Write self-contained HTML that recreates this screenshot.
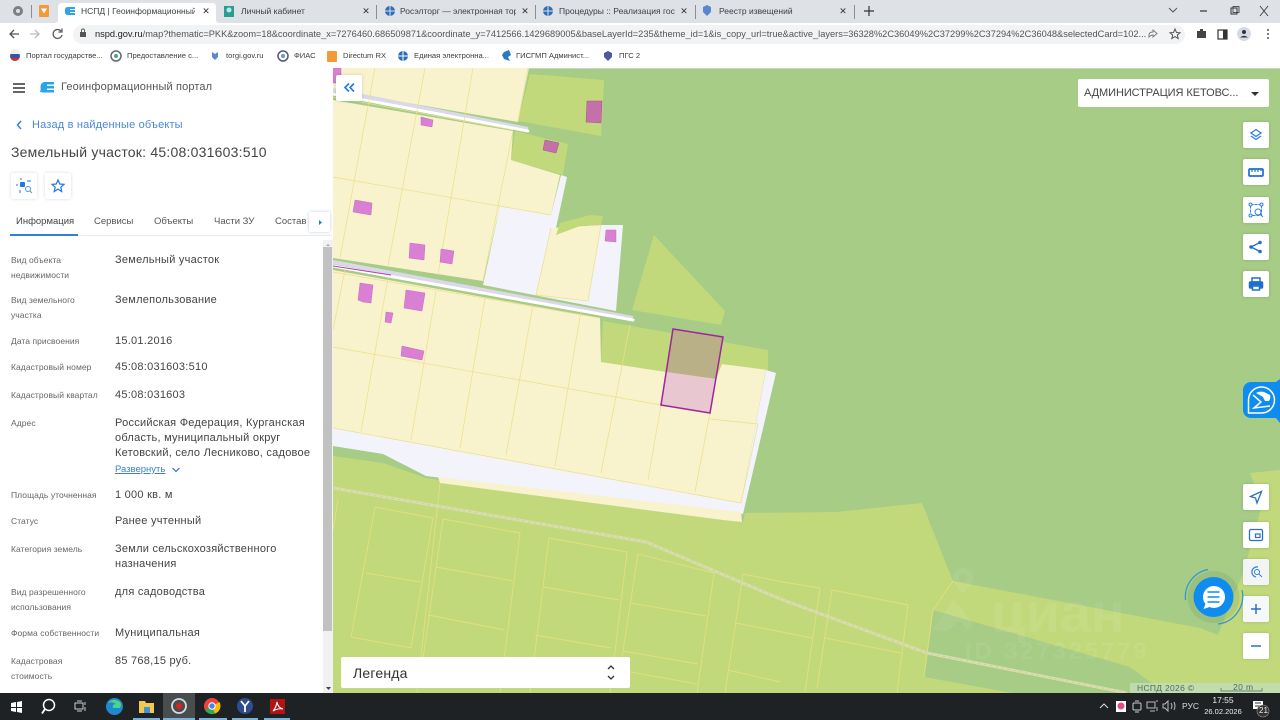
<!DOCTYPE html>
<html lang="ru">
<head>
<meta charset="utf-8">
<title>НСПД</title>
<style>
html,body{margin:0;padding:0;width:1280px;height:720px;overflow:hidden;background:#fff;font-family:"Liberation Sans","DejaVu Sans",sans-serif}
#w{position:absolute;left:0;top:0;width:1280px;height:720px;overflow:hidden;filter:blur(.3px)}
.t{position:absolute;white-space:nowrap}
.a{position:absolute}
.l{position:absolute;left:11px;font-size:8.5px;line-height:15px;color:#666;white-space:nowrap;letter-spacing:.06px}
.v{position:absolute;left:115px;font-size:11px;line-height:15px;color:#444;white-space:nowrap;letter-spacing:.25px}
.tab{position:absolute;top:5px;font-size:8.5px;line-height:12px;color:#3c4043;white-space:nowrap;overflow:hidden}
.x{position:absolute;top:5px;width:8px;text-align:center;font-size:9px;line-height:12px;color:#333}
.sep{position:absolute;top:5px;width:1px;height:14px;background:#8a8d91}
.bm{position:absolute;top:50px;font-size:7.6px;line-height:12px;color:#3c4043;white-space:nowrap}
.btn{position:absolute;width:26px;height:26px;background:#fff;border-radius:2px;box-shadow:0 0 3px rgba(0,0,0,.15)}
.btn svg{position:absolute;left:0;top:0}
.ul{position:absolute;top:718px;height:2px;background:#7ab3d8}
</style>
</head>
<body>
<div id="w">

<!-- Chrome tab strip -->
<div class="a" style="left:0;top:0;width:1280px;height:23px;background:#dee1e6"></div>
<svg class="a" style="left:0;top:0" width="1280" height="23">
  <circle cx="18" cy="11" r="5" fill="#7c7f83"/><circle cx="18" cy="11" r="2" fill="#dee1e6"/>
  <rect x="31" y="5" width="1" height="13" fill="#8a8d91"/>
  <rect x="39" y="5" width="10" height="12" rx="1" fill="#f29a38"/><path d="M41 8.500h6l-3 5z" fill="#fff"/>
  <path d="M54 23c3 0 4-1 4-4V7q0-4 4-4h150q4 0 4 4v12c0 3 1 4 4 4z" fill="#fff"/>
  <path d="M68 7h7v2h-5v1h5v2h-5v1h5v2h-7q-3 0-3-3v-2q0-3 3-3z" fill="#2aa5ea"/>
  <rect x="224" y="6" width="10" height="11" fill="#2a9d8f"/><circle cx="229" cy="10" r="2.500" fill="#bde6ee"/>
  <circle cx="390" cy="11" r="5" fill="#2d6fb5"/><path d="M385 11h10M390 6v10" stroke="#dee1e6" stroke-width="1"/>
  <circle cx="548" cy="11" r="5" fill="#2d6fb5"/><path d="M543 11h10M548 6v10" stroke="#dee1e6" stroke-width="1"/>
  <path d="M703 7l4-2 4 2v5l-4 4-4-4z" fill="#5a85d0"/>
  <path d="M864 11h10M869 6v10" stroke="#333" stroke-width="1.200"/>
  <path d="M1169 8l4 4 4-4" fill="none" stroke="#555"/>
  <path d="M1200 11h7" stroke="#333" stroke-width="1.200"/>
  <rect x="1231" y="8" width="6" height="6" fill="none" stroke="#333"/><rect x="1233" y="6.500" width="6" height="6" fill="none" stroke="#333" stroke-width=".8"/>
  <path d="M1260 6l8 10M1268 6l-8 10" stroke="#444" stroke-width="1"/>
</svg>
<div class="tab" style="left:81px;width:114px">НСПД | Геоинформационный портал</div>
<div class="x" style="left:202px">✕</div>
<div class="tab" style="left:241px;width:100px">Личный кабинет</div>
<div class="x" style="left:362px">✕</div>
<div class="tab" style="left:400px;width:116px">Росэлторг — электронная торговая</div>
<div class="x" style="left:521px">✕</div>
<div class="tab" style="left:559px;width:116px">Процедуры :: Реализация госимущества</div>
<div class="x" style="left:680px">✕</div>
<div class="tab" style="left:719px;width:100px">Реестр извещений</div>
<div class="x" style="left:839px">✕</div>
<div class="sep" style="left:376px"></div>
<div class="sep" style="left:535px"></div>
<div class="sep" style="left:695px"></div>
<div class="sep" style="left:854px"></div>

<!-- Address bar -->
<div class="a" style="left:73px;top:25px;width:1112px;height:19px;border-radius:10px;background:#f1f3f4"></div>
<svg class="a" style="left:0;top:23px" width="1280" height="23">
  <path d="M19 11H10m4-4l-4 4 4 4" fill="none" stroke="#555" stroke-width="1.300"/>
  <path d="M30 11h9m-4-4l4 4-4 4" fill="none" stroke="#bbb" stroke-width="1.300"/>
  <path d="M61 8a4.500 4.500 0 1 0 1 4M62 5.500v3.500h-3.500" fill="none" stroke="#555" stroke-width="1.200"/>
  <rect x="80" y="9" width="6" height="5" fill="#555"/><path d="M81.500 9V7.500a1.500 1.500 0 0 1 3 0V9" fill="none" stroke="#555" stroke-width=".9"/>
  <path d="M1149 14v-2q0-3 4-3V7l4 3.500-4 3.500v-2q-2 0-4 2z" fill="none" stroke="#777" stroke-width=".9"/>
  <path d="M1175 6l1.500 3.500 3.500.3-2.700 2.300.9 3.500-3.200-2-3.200 2 .9-3.500-2.700-2.300 3.500-.3z" fill="none" stroke="#555"/>
  <path d="M1197 8h3v-2h3v2h3v7h-9z" fill="#444"/>
  <rect x="1218" y="7" width="9" height="9" fill="none" stroke="#333" stroke-width="1.200"/><rect x="1223" y="7" width="4" height="9" fill="#333"/>
  <circle cx="1244" cy="11" r="7" fill="#d5dbe6"/><circle cx="1244" cy="9" r="2" fill="#333"/><path d="M1240 14.500q4-3.500 8 0z" fill="#333"/>
  <circle cx="1268" cy="7" r="1" fill="#555"/><circle cx="1268" cy="11" r="1" fill="#555"/><circle cx="1268" cy="15" r="1" fill="#555"/>
</svg>
<div class="t" style="left:95px;top:28px;font-size:9.25px;line-height:13px;color:#555"><span style="color:#222">nspd.gov.ru</span>/map?thematic=PKK&amp;zoom=18&amp;coordinate_x=7276460.686509871&amp;coordinate_y=7412566.1429689005&amp;baseLayerId=235&amp;theme_id=1&amp;is_copy_url=true&amp;active_layers=36328%2C36049%2C37299%2C37294%2C36048&amp;selectedCard=102...</div>

<!-- Bookmarks -->
<svg class="a" style="left:0;top:46px" width="640" height="22">
  <circle cx="15" cy="10" r="5" fill="#3554a5"/><path d="M10 8h10a5 5 0 0 0-10 0z" fill="#eee"/><path d="M10.500 12h9a5 5 0 0 1-9 0z" fill="#c9352b"/>
  <circle cx="116" cy="10" r="5" fill="none" stroke="#667" stroke-width="1.500"/><circle cx="116" cy="10" r="2" fill="#4a7"/>
  <path d="M212 6l3 2 3-2v5l-3 3-3-3z" fill="#5a85d0"/>
  <circle cx="283" cy="10" r="5" fill="none" stroke="#557" stroke-width="1.500"/><circle cx="283" cy="10" r="2" fill="#69c"/>
  <rect x="327" y="5" width="10" height="11" rx="1" fill="#f29a38"/>
  <circle cx="403" cy="10" r="5" fill="#2d6fb5"/><path d="M398 10h10M403 5v10" stroke="#fff" stroke-width="1"/>
  <path d="M504 6l5-2 2 5-3 2 2 4-6-2-2-4z" fill="#2a7bbd"/>
  <path d="M604 7l4-2 4 2v4l-4 4-4-4z" fill="#4a5aa0"/>
</svg>
<div class="bm" style="left:26px">Портал государстве...</div>
<div class="bm" style="left:127px">Предоставление с...</div>
<div class="bm" style="left:226px">torgi.gov.ru</div>
<div class="bm" style="left:294px">ФИАС</div>
<div class="bm" style="left:343px">Directum RX</div>
<div class="bm" style="left:414px">Единая электронна...</div>
<div class="bm" style="left:516px">ГИСГМП Админист...</div>
<div class="bm" style="left:619px">ПГС 2</div>

<!-- MAP -->
<svg class="a" style="left:333px;top:68px" width="947" height="625" viewBox="333 68 947 625">
  <rect x="333" y="68" width="947" height="625" fill="#a6cc85"/>
  <rect x="333" y="68" width="947" height="1" fill="#c9d3bd"/>
  <g fill="#c1d97b">
    <path d="M333 456L383 463L426 478L743 522L745 513L836 512L922 503L953 581L1200 628L1218 635L1244 570L1262 505L1250 473L1280 470V693H333Z"/>
    <path d="M530 74L604 80L601 136L518 121Z"/>
    <path d="M515 131L568 144L563 175L511 160Z"/>
    <path d="M654 235L725 311L721 325L632 310Z"/>
  </g>
  <path d="M933 610L924 677L1013 693H1165L1130 667Z" fill="#a6cc85"/>
  <path d="M333 425V446L383 454L426 476L743 514L776 373L766 370L741 503Z" fill="#f3f3fb"/>
  <path d="M500 206L551 215L561 175L567 177L556 228L536 295L588 301L601 225H623L616 311L483 285Z" fill="#f3f3fb"/>
  <g fill="#f8f2cd">
    <path d="M333 68H529L518 122L333 90Z"/>
    <path d="M333 100L513 131L511 160L560 175L551 215L500 206L483 281L333 258Z"/>
    <path d="M551 228L601 225L588 301L536 295Z"/>
    <path d="M333 270L600 318L601 362L722 364L766 369L741 503L333 428Z"/>
    <path d="M438 477L741 512L742 522L723 520L440 483Z"/>
  </g>
  <path d="M556 235L560 223L590 215L603 216L601 225L580 226Z" fill="#c1d97b"/>
  <path d="M603 321L768 350V370L722 364L716 379L666 372L601 362Z" fill="#c1d97b"/>
  <path d="M333 90L528 129" stroke="#d9d9ea" stroke-width="4" fill="none"/>
  <path d="M333 94L528 131" stroke="#fff" stroke-width="3" fill="none" stroke-linecap="round"/>
  <path d="M333 262L633 318" stroke="#d9d9ea" stroke-width="4" fill="none"/>
  <path d="M333 266L633 320" stroke="#fff" stroke-width="3" fill="none" stroke-linecap="round"/>
  <g stroke="#ecdf88" stroke-width=".7" fill="none">
    <path d="M375 68L340 258M425 68L388 266M473 68L438 275M528 68L518 121"/>
    <path d="M333 97L513 130M333 177L551 215M513 131L483 281M551 228L536 295L588 301L601 225"/>
    <path d="M388 278L361 432M436 291L411 440M485 298L460 448M533 305L506 455M581 311L555 466M630 325L601 473M661 405L648 480M710 413L695 492M758 424L741 503"/>
    <path d="M333 347L661 405M710 419L758 424M333 428L741 503M333 272L600 318"/>
    <path d="M345 270L333 330"/>
  </g>
  <g stroke="#e5df7c" stroke-width=".9" fill="none">
    <path d="M375 507L433 518L411 648L351 637L375 507M366 573L421 582M338 500L333 530"/>
    <path d="M440 483L417 693"/>
    <path d="M443 519L520 533L500 693M443 519L420 680M436 567L513 581M428 615L505 630"/>
    <path d="M549 538L627 552L610 693M549 538L530 693M544 587L619 600M535 635L611 648"/>
    <path d="M638 554L714 573L697 693M638 554L620 670L697 684M631 603L706 616M623 651L698 664"/>
    <path d="M743 574L783 582L820 588L805 692M743 574L725 693M736 623L782 632L812 638M728 670L780 682"/>
    <path d="M832 590L908 605L897 693M832 590L817 688M825 638L901 653"/>
    <path d="M953 581L933 610L924 677"/>
  </g>
  <path d="M333 488L646 542L783 600L927 653L1127 693" stroke="#d8dcae" stroke-width="3" fill="none"/>
  <path d="M333 488L646 542L783 600L927 653L1127 693" stroke="#c5d38f" stroke-width="1" stroke-dasharray="2 4" fill="none"/>
  <g fill="#da80d4" stroke="#c56bc2" stroke-width=".5">
    <path d="M333 68H341V80L336 83L333 83Z"/>
    <path d="M421 117L433 120L432 127L421 125Z"/>
    <path d="M355 200L372 203L371 215L353 212Z"/>
    <path d="M410 243L425 245L424 260L409 258Z"/>
    <path d="M441 249L454 251L452 264L440 262Z"/>
    <path d="M606 230L616 230L616 242L605 241Z"/>
    <path d="M360 283L373 285L371 303L363 302L358 300Z"/>
    <path d="M406 290L425 293L422 311L404 308Z"/>
    <path d="M386 312L393 313L391 323L385 322Z"/>
    <path d="M402 346L424 351L422 360L401 356Z"/>
  </g>
  <g fill="#c570a9" stroke="#a8528f" stroke-width=".5">
    <path d="M587 101L602 101L601 123L586 122Z"/>
    <path d="M545 140L559 143L556 153L543 150Z"/>
  </g>
  <path d="M333 266L391 275" stroke="#b73ab0" stroke-width="1" fill="none"/>
  <path d="M673 329L723 337L716 379L666 372Z" fill="#b9b088"/>
  <path d="M666 372L716 379L710 413L661 405Z" fill="#e8c7d0"/>
  <path d="M673 329L723 337L710 413L661 405Z" fill="none" stroke="#a0259a" stroke-width="1.500"/>
  <g fill="#fff" opacity=".07">
    <path d="M963 568a10 10 0 0 1 10 10c0 6-6 11-10 16c-4-5-10-10-10-16a10 10 0 0 1 10-10zM963 574a4 4 0 1 0 .1 0z" fill-rule="evenodd"/>
    <path d="M953 600l10 10 10 14-6 6-7-10-13 11-14-1z"/>
    <text x="991" y="632" font-family="Liberation Sans" font-size="56" font-weight="bold">циан</text>
    <text x="965" y="659" font-family="Liberation Sans" font-size="24" font-weight="bold" letter-spacing="2.800">ID 327325779</text>
  </g>
  <rect x="1130" y="683" width="150" height="10" fill="#c2dcb0" opacity=".9"/>
  <text x="1137" y="691" font-family="Liberation Sans" font-size="8.500" fill="#4e6a6a" letter-spacing=".3">НСПД 2026 ©</text>
  <text x="1233" y="690" font-family="Liberation Sans" font-size="8.500" fill="#4e6a6a" letter-spacing=".4">20 m</text>
  <path d="M1221 688v3h41v-3" fill="none" stroke="#4e6a6a" stroke-width=".7"/>
</svg>

<!-- Left panel -->
<div class="a" style="left:0;top:68px;width:333px;height:625px;background:#fff"></div>
<svg class="a" style="left:0;top:68px" width="333" height="625">
  <path d="M13 16h12M13 20h12M13 24h12" stroke="#333" stroke-width="1.500"/>
  <path d="M44 14h10v2.500h-7v1.500h7v2.500h-7v1.500h7v2.500h-11l-3-.5q1-3 .5-5q0-4 3.500-5z" fill="#2aa5ea"/>
  <path d="M21 53l-3.500 4 3.500 4" fill="none" stroke="#3b82e6" stroke-width="1.500"/>
</svg>
<div class="t" style="left:61px;top:80px;font-size:11px;line-height:15px;color:#555;letter-spacing:.14px">Геоинформационный портал</div>
<div class="t" style="left:32px;top:118px;font-size:11px;line-height:15px;color:#4a86dd;letter-spacing:.17px">Назад в найденные объекты</div>
<div class="t" style="left:11px;top:143px;font-size:14px;line-height:18px;color:#444;letter-spacing:.22px">Земельный участок: 45:08:031603:510</div>

<div class="btn" style="left:11px;top:173px"><svg width="26" height="26">
  <rect x="9" y="9" width="5" height="5" rx="1" fill="#1f7ae0"/>
  <path d="M5 12h2M16 8h4M9 6h2M9 17v3" stroke="#1f7ae0" stroke-width="1"/>
  <circle cx="17" cy="16" r="2.500" fill="none" stroke="#5a90d8"/><path d="M19 18l2 2" stroke="#5a90d8"/>
</svg></div>
<div class="btn" style="left:45px;top:173px"><svg width="26" height="26">
  <path d="M13 7l1.800 4 4.200.4-3.200 2.800 1 4.300-3.800-2.300-3.800 2.300 1-4.300L7 11.400l4.200-.4z" fill="none" stroke="#1f7ae0" stroke-width="1.200"/>
</svg></div>

<div class="t" style="left:16px;top:215px;font-size:9.500px;line-height:13px;color:#444">Информация</div>
<div class="t" style="left:94px;top:215px;font-size:9.500px;line-height:13px;color:#555">Сервисы</div>
<div class="t" style="left:154px;top:215px;font-size:9.500px;line-height:13px;color:#555">Объекты</div>
<div class="t" style="left:214px;top:215px;font-size:9.500px;line-height:13px;color:#555">Части ЗУ</div>
<div class="t" style="left:275px;top:215px;font-size:9.500px;line-height:13px;color:#555">Состав</div>
<div class="a" style="left:10px;top:235px;width:322px;height:1px;background:#e6ebf0"></div>
<div class="a" style="left:10px;top:234px;width:68px;height:2px;background:#2f7fe0"></div>
<div class="a" style="left:309px;top:212px;width:21px;height:20px;background:#fff;border-radius:2px;box-shadow:0 0 3px rgba(60,110,200,.35)"></div>
<svg class="a" style="left:309px;top:212px" width="21" height="20"><path d="M10 8l3 2.500-3 2.500z" fill="#1f7ae0"/></svg>

<div class="a" style="left:323px;top:240px;width:10px;height:453px;background:#f1f1f1"></div>
<div class="a" style="left:323px;top:247px;width:9px;height:384px;background:#c1c1c1"></div>
<svg class="a" style="left:323px;top:240px" width="10" height="453"><path d="M3 6l2-2 2 2z" fill="#aaa"/><path d="M3 447h5l-2.500 3z" fill="#444"/></svg>

<div class="l" style="top:253px">Вид объекта</div>
<div class="l" style="top:268px">недвижимости</div>
<div class="v" style="top:253px">Земельный участок</div>
<div class="l" style="top:293px">Вид земельного</div>
<div class="l" style="top:308px">участка</div>
<div class="v" style="top:293px">Землепользование</div>
<div class="l" style="top:334px">Дата присвоения</div>
<div class="v" style="top:334px">15.01.2016</div>
<div class="l" style="top:360px">Кадастровый номер</div>
<div class="v" style="top:360px">45:08:031603:510</div>
<div class="l" style="top:388px">Кадастровый квартал</div>
<div class="v" style="top:388px">45:08:031603</div>
<div class="l" style="top:416px">Адрес</div>
<div class="v" style="top:416px">Российская Федерация, Курганская</div>
<div class="v" style="top:431px">область, муниципальный округ</div>
<div class="v" style="top:446px">Кетовский, село Лесниково, садовое</div>
<div class="t" style="left:115px;top:463px;font-size:9.5px;line-height:14px;color:#3a7fdc;text-decoration:underline">Развернуть</div>
<svg class="a" style="left:170px;top:465px" width="12" height="10"><path d="M2.500 3l3.500 3.500L9.500 3" fill="none" stroke="#3a7fdc" stroke-width="1.300"/></svg>
<div class="l" style="top:488px">Площадь уточненная</div>
<div class="v" style="top:488px">1 000 кв. м</div>
<div class="l" style="top:514px">Статус</div>
<div class="v" style="top:514px">Ранее учтенный</div>
<div class="l" style="top:542px">Категория земель</div>
<div class="v" style="top:542px">Земли сельскохозяйственного</div>
<div class="v" style="top:557px">назначения</div>
<div class="l" style="top:585px">Вид разрешенного</div>
<div class="l" style="top:600px">использования</div>
<div class="v" style="top:585px">для садоводства</div>
<div class="l" style="top:626px">Форма собственности</div>
<div class="v" style="top:626px">Муниципальная</div>
<div class="l" style="top:654px">Кадастровая</div>
<div class="l" style="top:669px">стоимость</div>
<div class="v" style="top:654px">85 768,15 руб.</div>

<!-- Map controls -->
<div class="btn" style="left:336px;top:75px"><svg width="26" height="26">
  <path d="M13 8.500l-4 4 4 4M18 8.500l-4 4 4 4" fill="none" stroke="#1f7ae0" stroke-width="1.600"/>
</svg></div>
<div class="a" style="left:1078px;top:79px;width:191px;height:28px;background:#fff;border-radius:2px"></div>
<div class="t" style="left:1084px;top:86px;font-size:11px;line-height:15px;color:#444;letter-spacing:-.07px">АДМИНИСТРАЦИЯ КЕТОВС...</div>
<svg class="a" style="left:1249px;top:90px" width="12" height="8"><path d="M2 2h8L6 6z" fill="#333"/></svg>

<div class="btn" style="left:1243px;top:122px"><svg width="26" height="26">
  <path d="M13 7.500l5 3.500-5 3.500-5-3.500z" fill="none" stroke="#2f80e0" stroke-width="1.300"/><path d="M8 14l5 3.500 5-3.500" fill="none" stroke="#2f80e0" stroke-width="1.300"/>
</svg></div>
<div class="btn" style="left:1243px;top:159px"><svg width="26" height="26">
  <rect x="6" y="10" width="14" height="7" rx="1" fill="none" stroke="#1f6fd0" stroke-width="1.700"/><path d="M9 10v3M12 10v3M15 10v3M18 10v2" stroke="#1f6fd0" stroke-width="1.200"/>
</svg></div>
<div class="btn" style="left:1243px;top:197px"><svg width="26" height="26">
  <rect x="7.500" y="7.500" width="11" height="11" fill="none" stroke="#2f80e0" stroke-dasharray="3 1"/><circle cx="7.500" cy="7.500" r="1.500" fill="#fff" stroke="#2f80e0"/><circle cx="18.500" cy="7.500" r="1.500" fill="#fff" stroke="#2f80e0"/><circle cx="7.500" cy="18.500" r="1.500" fill="#fff" stroke="#2f80e0"/><circle cx="15" cy="15" r="3" fill="#fff" stroke="#2f80e0"/><path d="M17 17l3 3" stroke="#2f80e0"/>
</svg></div>
<div class="btn" style="left:1243px;top:234px"><svg width="26" height="26">
  <circle cx="8" cy="13" r="1.800" fill="#1f6fd0"/><circle cx="17" cy="8.500" r="1.800" fill="#1f6fd0"/><circle cx="17" cy="17.500" r="1.800" fill="#1f6fd0"/><path d="M8 13l9-4.500M8 13l9 4.500" stroke="#1f6fd0" stroke-width="1.300"/>
</svg></div>
<div class="btn" style="left:1243px;top:271px"><svg width="26" height="26">
  <rect x="9" y="7" width="8" height="4" fill="none" stroke="#1f6fd0" stroke-width="1.500"/><rect x="6.500" y="11" width="13" height="6" rx="1" fill="#1f6fd0" stroke="#1f6fd0" stroke-width="1.500"/><rect x="9.500" y="15" width="7" height="4" fill="#fff" stroke="#1f6fd0" stroke-width="1.500"/>
</svg></div>

<div class="a" style="left:1243px;top:382px;width:37px;height:36px;background:#0f8cf0;border-radius:8px 0 0 8px"></div>
<svg class="a" style="left:1243px;top:376px" width="37" height="48">
  <path d="M33 6l4-3v6zM33 42l4 5v-6z" fill="#0f8cf0"/>
  <path d="M18.500 11a13 13 0 1 1 0 26H5.500V24A13 13 0 0 1 18.500 11z" fill="none" stroke="#fff" stroke-width="1.500"/>
  <path d="M13 17q3-2 8-1l6 3q1 3-1 6H22l-2-4z" fill="#fff"/>
  <path d="M10 19l8 7-7 6 16-2" fill="none" stroke="#fff" stroke-width="1.500"/>
</svg>

<div class="btn" style="left:1243px;top:484px"><svg width="26" height="26">
  <path d="M18.500 7.500L7.500 12.500l5 1.500 1.500 5z" fill="none" stroke="#2a70c8" stroke-width="1.300"/>
</svg></div>
<div class="btn" style="left:1243px;top:522px"><svg width="26" height="26">
  <rect x="6.500" y="7.500" width="13" height="11" rx="1.500" fill="none" stroke="#2a70c8" stroke-width="1.300"/><rect x="12.500" y="12" width="4.500" height="3.500" fill="none" stroke="#2a70c8" stroke-width="1.200"/>
</svg></div>
<div class="btn" style="left:1243px;top:559px;background:#f3f4f6"><svg width="26" height="26">
  <path d="M15 8a5 5 0 1 0-2 10" fill="none" stroke="#2f80e0" stroke-width="1.200"/><circle cx="14" cy="13" r="2.500" fill="none" stroke="#2f80e0"/><path d="M16 15l3 3" stroke="#2f80e0"/>
</svg></div>
<div class="btn" style="left:1243px;top:596px;background:#f6f7f8"><svg width="26" height="26">
  <path d="M13 8v10M8 13h10" stroke="#2a70c8" stroke-width="1.500"/>
</svg></div>
<div class="btn" style="left:1243px;top:633px"><svg width="26" height="26">
  <path d="M8 13h10" stroke="#2a70c8" stroke-width="1.500"/>
</svg></div>

<svg class="a" style="left:1175px;top:558px" width="80" height="80">
  <circle cx="38.500" cy="39" r="26" fill="#5f8a60" opacity=".18"/>
  <circle cx="38.500" cy="39" r="20" fill="#0f8cf0"/>
  <path d="M38.500 28a11 11 0 1 1-4 21l-6 2 2-5a11 11 0 0 1 8-18z" fill="#fff"/>
  <path d="M32.500 34h12M32.500 39h12M32.500 44h12" stroke="#0f8cf0" stroke-width="1.600"/>
  <path d="M33 11.500A28 28 0 0 0 10.500 42" fill="none" stroke="#2d95df" stroke-width="1.200"/>
  <path d="M67 32A28 28 0 0 1 43 66" fill="none" stroke="#2d95df" stroke-width="1.200"/>
</svg>

<div class="a" style="left:341px;top:657px;width:289px;height:31px;background:#fff;border-radius:2px"></div>
<div class="t" style="left:353px;top:664px;font-size:14px;line-height:18px;color:#333;letter-spacing:.2px">Легенда</div>
<svg class="a" style="left:605px;top:664px" width="12" height="18"><path d="M3 5l3-3 3 3M3 12l3 3 3-3" fill="none" stroke="#333" stroke-width="1.300"/></svg>

<!-- Taskbar -->
<div class="a" style="left:0;top:693px;width:1280px;height:27px;background:#1f2224"></div>
<div class="a" style="left:163px;top:693px;width:32px;height:27px;background:#4a4d4e"></div>
<svg class="a" style="left:0;top:693px" width="300" height="27">
  <path d="M11 10l5-1v5h-5zM17 9l5-1v6h-5zM11 15h5v4l-5-1zM17 15h5v5l-5-1z" fill="#fff"/>
  <circle cx="49" cy="12" r="5.500" fill="none" stroke="#fff" stroke-width="1.500"/><path d="M45 16l-3 4.500" stroke="#fff" stroke-width="1.800"/>
  <path d="M75 10h8v6h-8zM85 9v3M85 14v4M77 8h5M77 18h5" fill="none" stroke="#ccc" stroke-width="1"/>
  <circle cx="114.500" cy="13.500" r="8.500" fill="#1f88d0"/><path d="M108 10q5-6 12-1q2 3 0 6h-7q-1-4 3-4q-4-3-8-1z" fill="#4fd28a"/>
  <path d="M139 8h6l1 2h8v10h-15z" fill="#f2c94c"/><rect x="144" y="14" width="6" height="6" fill="#4a90d0"/>
  <circle cx="179" cy="13" r="7" fill="none" stroke="#d5dce8" stroke-width="1.800"/><circle cx="179" cy="13" r="3" fill="#d22"/>
  <circle cx="212" cy="13" r="8" fill="#e8453c"/><path d="M212 13L205 17A8 8 0 0 0 215 20.500z" fill="#34a853"/><path d="M212 13l3 7.500A8 8 0 0 0 219.500 9z" fill="#fbbc05"/><circle cx="212" cy="13" r="3.200" fill="#4285f4" stroke="#fff"/>
  <circle cx="245" cy="13" r="8" fill="#2d4d8f"/><path d="M241 8l4 5 4-5M245 13v6" fill="none" stroke="#fff" stroke-width="1.800"/>
  <rect x="270" y="6" width="15" height="15" fill="#b31312"/><path d="M273 18q3-3 4-9q1 6 6 7q-5-1-10 2z" fill="none" stroke="#fff" stroke-width="1.100"/>
</svg>
<div class="ul" style="left:133px;width:27px"></div>
<div class="ul" style="left:163px;width:32px"></div>
<div class="ul" style="left:199px;width:28px"></div>
<div class="ul" style="left:232px;width:26px"></div>
<div class="ul" style="left:264px;width:26px"></div>
<svg class="a" style="left:1090px;top:693px" width="190" height="27">
  <path d="M10 15l4-4 4 4" fill="none" stroke="#ddd"/>
  <rect x="26" y="8" width="10" height="11" fill="#fff"/><circle cx="31" cy="13" r="3.500" fill="#e34b8a"/>
  <rect x="43" y="10" width="8" height="7" rx="1" fill="none" stroke="#ccc"/><path d="M45 8h4M45 19h4" stroke="#ccc"/>
  <rect x="57" y="9" width="8" height="6" fill="none" stroke="#bbb"/><path d="M66 8h2M67 14v4M60 18h5" stroke="#bbb"/>
  <path d="M73 11h2l3-3v10l-3-3h-2zM81 10q2 3 0 6M84 9q2 4 0 8" fill="none" stroke="#bbb"/>
  <path d="M163 8h10v8h-10z" fill="#fff"/><path d="M165 10h6M165 13h6" stroke="#333"/>
  <circle cx="173" cy="18" r="6" fill="#333" stroke="#999" stroke-width=".6"/>
</svg>
<div class="t" style="left:1182px;top:700px;font-size:8.500px;line-height:12px;color:#ddd">РУС</div>
<div class="t" style="left:1205px;top:694px;width:36px;text-align:center;font-size:8.500px;line-height:12px;color:#eee">17:55</div>
<div class="t" style="left:1196px;top:706px;width:54px;text-align:center;font-size:7.5px;line-height:12px;color:#eee">26.02.2026</div>
<div class="t" style="left:1259px;top:705px;font-size:8px;line-height:12px;color:#eee">21</div>
</div>
</body>
</html>
